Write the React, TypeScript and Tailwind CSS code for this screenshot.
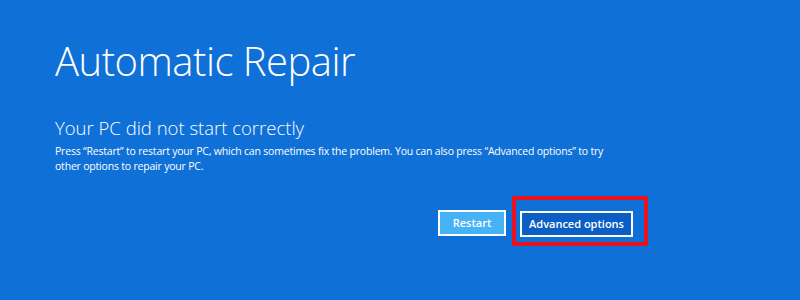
export default function App() {
  return (
    <div className="w-[800px] h-[300px] overflow-hidden bg-[#0f70d7] text-white font-['Open_Sans','Noto_Sans',sans-serif]">
      <div className="pl-[55px] pt-[37px]">
        <h1 className="text-[40px] leading-[48px] font-light tracking-[-0.5px]">Automatic Repair</h1>
        <h2 className="mt-[31px] text-[18.5px] leading-[24px] font-light">Your PC did not start correctly</h2>
        <p className="mt-[4px] w-[570px] text-[10.5px] leading-[15px] tracking-[-0.2px]">
          Press “Restart” to restart your PC, which can sometimes fix the problem. You can also press “Advanced options” to try other options to repair your PC.
        </p>
        <div className="mt-[22px] ml-[383px] flex items-start">
          <button className="mt-[14px] w-[68px] h-[26px] border-2 border-white bg-[#45b3f5] text-[11px] font-semibold">
            Restart
          </button>
          <div className="ml-[6px] border-4 border-[#e8131f] pl-[4px] pr-[11px] pt-[10px] pb-[5px]">
            <button className="w-[113px] h-[26px] border-2 border-white bg-[#0b5fc4] text-[11px] font-semibold">
              Advanced options
            </button>
          </div>
        </div>
      </div>
    </div>
  );
}
